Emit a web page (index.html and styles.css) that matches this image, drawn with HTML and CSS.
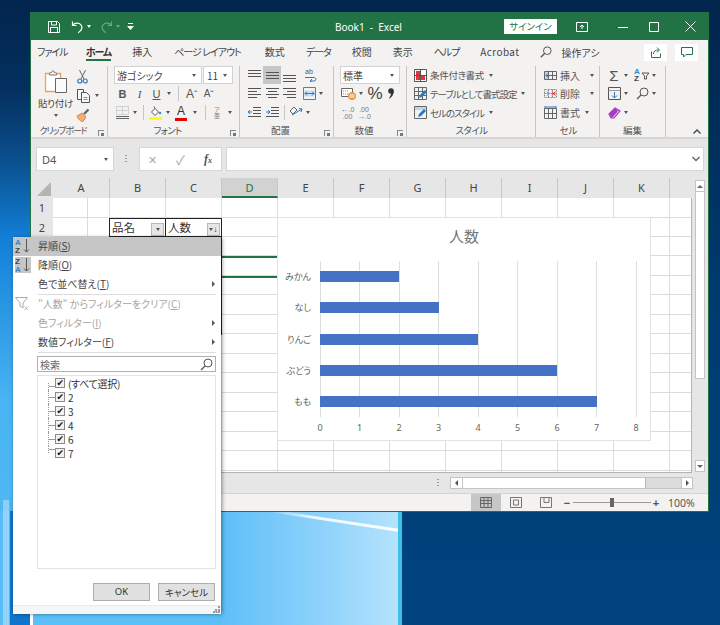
FILE: index.html
```html
<!DOCTYPE html>
<html lang="ja">
<head>
<meta charset="utf-8">
<title>Book1 - Excel</title>
<link rel="stylesheet" href="styles.css">
</head>
<body>
<div class="desktop">
  <div class="pane"><div class="beam"></div></div>
  <div class="window">
    <div class="titlebar">
      <span class="tb-ic save"><svg width="14" height="14" viewBox="0 0 14 14" fill="none" stroke="#fff"><path d="M1.5 1.5h9l2 2v9h-11z M4.5 1.5v3.5h5v-3.5 M3.500 12.500v-5h7v5"/></svg></span>
      <span class="tb-ic undo"><svg width="13" height="14" viewBox="0 0 13 14" fill="none" stroke="#fff" stroke-width="1.2"><path d="M1.5 1.5v4h4 M1.8 5.2C4 2.5 8 2.5 10 4.8c2 2.7.6 6-2.8 8"/></svg></span>
      <span class="caret white cw"></span>
      <span class="tb-ic redo"><svg width="13" height="14" viewBox="0 0 13 14" fill="none" stroke="#fff" stroke-width="1.2"><path d="M11.5 1.5v4h-4 M11.2 5.2C9 2.5 5 2.5 3 4.8c-2 2.7-.6 6 2.8 8"/></svg></span>
      <span class="caret white faded cw"></span>
      <span class="tb-ic qat"><svg width="7" height="7" viewBox="0 0 7 7" fill="#fff"><path d="M1 0h5v1H1z M0 3h7L3.500 7z"/></svg></span>
      <span class="doc-title">Book1&nbsp; -&nbsp; Excel</span>
      <span class="signin">サインイン</span>
      <span class="tb-ic display"><svg width="12" height="10" viewBox="0 0 12 10" fill="none" stroke="#fff"><path d="M.5.500h11v9H.500z"/><path d="M6 7V3M4 5l2-2 2 2" /></svg></span>
      <span class="tb-ic min"><svg width="10" height="10" viewBox="0 0 10 10" stroke="#fff"><path d="M0 5.500h10"/></svg></span>
      <span class="tb-ic max"><svg width="10" height="10" viewBox="0 0 10 10" fill="none" stroke="#fff"><path d="M.5.500h9v9h-9z"/></svg></span>
      <span class="tb-ic close"><svg width="11" height="11" viewBox="0 0 11 11" stroke="#fff"><path d="M.5.500l10 10M10.500.5l-10 10"/></svg></span>
    </div>

    <div class="tabs">
      <span class="tab kana">ファイル</span>
      <span class="tab kana active">ホーム</span>
      <span class="tab">挿入</span>
      <span class="tab kana layout">ページ レイアウト</span>
      <span class="tab">数式</span>
      <span class="tab kana">データ</span>
      <span class="tab">校閲</span>
      <span class="tab">表示</span>
      <span class="tab kana">ヘルプ</span>
      <span class="tab acro">Acrobat</span>
      <span class="tell"><svg width="12" height="12" viewBox="0 0 12 12" fill="none" stroke="#555"><circle cx="7.300" cy="4.700" r="3.800"/><path d="M4.500 7.500L.8 11.200" stroke-width="1.300"/></svg><span class="tell-text">操作アシ</span></span>
      <span class="tab-btn share"><svg width="12" height="12" viewBox="0 0 12 12" fill="none" stroke="#217346"><path d="M1.500 5.500v6h9v-4M3.500 8c0-3 2-4 5-4M7 1.500l2.500 2.500L7 6.500"/></svg></span>
      <span class="tab-btn comment"><svg width="12" height="11" viewBox="0 0 12 11" fill="none" stroke="#217346"><path d="M.5.500h11v7H5l-2.500 2.500V7.500h-2z"/></svg></span>
    </div>

    <div class="ribbon">
      <section class="group g1">
        <div class="body clip-body">
          <div class="paste">
            <svg width="24" height="26" viewBox="0 0 24 26"><path d="M1.500 4.500h15v18h-15z" fill="#fff" stroke="#eda455" stroke-width="1.300"/><path d="M5.500 4.500c0-1 1-1 2-1 0-2 3-2 3 0 1 0 2 0 2 1v1.500h-7z" fill="#f3f2f1" stroke="#777"/><path d="M11.500 9.500h11v14h-11z" fill="#fbfbfb" stroke="#666"/></svg>
            <span class="paste-label">貼り付け</span>
            <span class="caret"></span>
          </div>
          <div class="clip-col">
            <span class="ic"><svg width="11" height="15" viewBox="0 0 11 15" fill="none"><path d="M2.500 1l4.500 9M8.500 1L4 10" stroke="#666"/><circle cx="2.800" cy="12" r="2" stroke="#2b79c2" stroke-width="1.200"/><circle cx="8.200" cy="12" r="2" stroke="#2b79c2" stroke-width="1.200"/></svg></span>
            <span class="ic-cap"><svg width="15" height="15" viewBox="0 0 15 15" fill="#fafafa" stroke="#555"><path d="M1.500 1.500h6v10h-6z"/><path d="M5.500 4.500h5l3 3v7h-8z"/><path d="M7.500 9.500h4M7.500 11.500h4" stroke="#888"/></svg><span class="caret"></span></span>
            <span class="ic brush"><svg width="14" height="14" viewBox="0 0 14 14"><path d="M1 8l5-3 4 4-3 4.500c-2 .5-5-2.500-6-5.500z" fill="#f0b070" stroke="#de8a3a"/><path d="M8 6l4.500-4.500" stroke="#666" stroke-width="2.400"/></svg></span>
          </div>
        </div>
        <div class="glabel has-launcher clip-label">クリップボード<span class="launcher"></span></div>
      </section>

      <section class="group g2">
        <div class="body">
          <div class="row">
            <span class="select font-name"><span>游ゴシック</span><span class="caret"></span></span>
            <span class="select font-size"><span>11</span><span class="caret"></span></span>
          </div>
          <div class="row">
            <span class="b w17 bold">B</span>
            <span class="b w17 ital">I</span>
            <span class="b w17 under">U</span>
            <span class="b w8"><span class="caret"></span></span>
            <span class="vsep gap-sep1"></span>
            <span class="b w17 big-a">A<sup class="up">ˆ</sup></span>
            <span class="b w17 small-a">A<sup class="down">ˇ</sup></span>
          </div>
          <div class="row">
            <span class="b w16"><svg width="13" height="13" viewBox="0 0 13 13" fill="none"><path d="M.5.500h12v8H.500zM6.500.500v8M.5 4.500h12" stroke="#b5b5b5" stroke-dasharray="1 1"/><path d="M0 10.500h13" stroke="#666"/><path d="M0 12.500h13" stroke="#666"/></svg></span>
            <span class="b w10"><span class="caret"></span></span>
            <span class="vsep gap-sep2"></span>
            <span class="b w18"><svg width="13" height="14" viewBox="0 0 13 14"><path d="M2.500 6L6 2.500 9.500 6 6 9.500z" fill="#fff" stroke="#555"/><path d="M5 .5l1 2" stroke="#555"/><circle cx="11" cy="7" r="1.300" fill="#3a8fd0"/><path d="M0 11h13v3H0z" fill="#ffff00"/></svg></span>
            <span class="b w8"><span class="caret"></span></span>
            <span class="b w18 color-a">A<span class="red"></span></span>
            <span class="b w10"><span class="caret"></span></span>
            <span class="vsep gap-sep3"></span>
            <span class="b w16 furi">ア<small>亜</small></span>
            <span class="b w10"><span class="caret"></span></span>
          </div>
        </div>
        <div class="glabel has-launcher font-label">フォント<span class="launcher"></span></div>
      </section>

      <section class="group g3">
        <div class="body">
          <div class="row">
            <span class="b w17"><svg width="13" height="13" viewBox="0 0 13 13" stroke="#555"><path d="M0 1.500h13M0 4.500h13M0 7.500h13"/></svg></span>
            <span class="b w18 on"><svg width="13" height="13" viewBox="0 0 13 13" stroke="#555"><path d="M0 3.500h13M0 6.500h13M0 9.500h13"/></svg></span>
            <span class="b w17"><svg width="13" height="13" viewBox="0 0 13 13" stroke="#555"><path d="M0 6.500h13M0 9.500h13M0 12.500h13"/></svg></span>
            <span class="b w18 ml3"><svg width="13" height="14" viewBox="0 0 13 14" fill="none"><text x="1" y="6" class="svg-ab">ab</text><path d="M1 9.500h9c2.500 0 2.500 3.500 0 3.500H6M8 11l-2 2 2 1" stroke="#2b79c2"/></svg></span>
          </div>
          <div class="row">
            <span class="b w17"><svg width="13" height="11" viewBox="0 0 13 11" stroke="#555"><path d="M0 .5h13M0 3.500h9M0 6.500h13M0 9.500h9"/></svg></span>
            <span class="b w18"><svg width="13" height="11" viewBox="0 0 13 11" stroke="#555"><path d="M0 .5h13M2 3.500h9M0 6.500h13M2 9.500h9"/></svg></span>
            <span class="b w17"><svg width="13" height="11" viewBox="0 0 13 11" stroke="#555"><path d="M0 .5h13M4 3.500h9M0 6.500h13M4 9.500h9"/></svg></span>
            <span class="b w16 ml3"><svg width="13" height="13" viewBox="0 0 13 13" fill="none"><path d="M.5.500h12v12H.500z" stroke="#777"/><path d="M1 3.500h11v6H1z" fill="#cfe3f4"/><path d="M2 6.500h9M4 4.500l-2 2 2 2M9 4.500l2 2-2 2" stroke="#2b79c2"/></svg></span>
            <span class="b w8"><span class="caret"></span></span>
          </div>
          <div class="row">
            <span class="b w17"><svg width="13" height="11" viewBox="0 0 13 11" fill="none"><path d="M5 .5h8M5 3.500h8M5 6.500h8M0 9.500h13" stroke="#555"/><path d="M4 5H0M2 3L0 5l2 2" stroke="#2b79c2"/></svg></span>
            <span class="b w18"><svg width="13" height="11" viewBox="0 0 13 11" fill="none"><path d="M5 .5h8M5 3.500h8M5 6.500h8M0 9.500h13" stroke="#555"/><path d="M0 5h4M2 3l2 2-2 2" stroke="#2b79c2"/></svg></span>
            <span class="vsep gap-sep4"></span>
            <span class="b w17"><svg width="14" height="13" viewBox="0 0 14 13" fill="none"><path d="M1 5l4-4 3 3-4 4z" stroke="#666"/><path d="M3 9l10-6M10 2.500l3 .5-1 3" stroke="#2b79c2"/></svg></span>
            <span class="b w8"><span class="caret"></span></span>
          </div>
        </div>
        <div class="glabel has-launcher">配置<span class="launcher"></span></div>
      </section>

      <section class="group g4">
        <div class="body">
          <div class="row"><span class="select num"><span>標準</span><span class="caret"></span></span></div>
          <div class="row">
            <span class="b w17"><svg width="16" height="13" viewBox="0 0 16 13"><path d="M.5 1.500h11v8H.500z" fill="#fff" stroke="#666"/><path d="M2 4h6M2 7h6" stroke="#888" stroke-dasharray="1 1"/><circle cx="11" cy="9" r="4" fill="#eb9a45"/><path d="M8.500 8h5M8.500 10h5" stroke="#fff"/></svg></span>
            <span class="b w8"><span class="caret"></span></span>
            <span class="b w20 pct">%</span>
            <span class="b w12"><svg width="6" height="11" viewBox="0 0 6 11"><circle cx="3" cy="3" r="2.800" fill="#333"/><path d="M5.800 3c0 3-1.500 6-4 7.500L1 10c1.600-1.500 2-3.500 2-5z" fill="#333"/></svg></span>
          </div>
          <div class="row">
            <span class="b w15 dec"><span class="dec-top"><i class="arrow">←</i>.0</span><span>.00</span></span>
            <span class="b w18 dec"><span>.00</span><span class="dec-top"><i class="arrow">→</i>.0</span></span>
          </div>
        </div>
        <div class="glabel has-launcher">数値<span class="launcher"></span></div>
      </section>

      <section class="group g5">
        <div class="body">
          <div class="row cmd">
            <svg width="13" height="13" viewBox="0 0 13 13"><path d="M.5.500h12v12H.500z" fill="#fff" stroke="#555"/><path d="M2 2h4v4H2zM7 7h4v4H7zM2 7h4v4H2z" fill="#e2333a"/><path d="M6.500 0v13M0 6.500h13" stroke="#555"/></svg>
            <span class="t-kanji">条件付き書式</span><span class="caret"></span>
          </div>
          <div class="row cmd">
            <svg width="13" height="13" viewBox="0 0 13 13" fill="none"><path d="M.5.500h12v12H.500zM.5 4.500h12M.5 8.500h12M4.500.500v12M8.500.500v12" stroke="#666"/><path d="M5 11l1-3 5-5 2 2-5 5z" fill="#2b79c2"/></svg>
            <span class="t-kana">テーブルとして書式設定</span><span class="caret"></span>
          </div>
          <div class="row cmd">
            <svg width="13" height="13" viewBox="0 0 13 13" fill="none"><path d="M.5.500h12v12H.500z" stroke="#666"/><path d="M1 1h11v3H1z" fill="#bcd6ee"/><path d="M4 11l1-3 5-5 2 2-5 5z" fill="#2b79c2"/></svg>
            <span class="t-kana">セルのスタイル</span><span class="caret"></span>
          </div>
        </div>
        <div class="glabel style-label">スタイル</div>
      </section>

      <section class="group g6">
        <div class="body">
          <div class="row cmd cell-cmd">
            <svg width="13" height="13" viewBox="0 0 13 13" fill="none"><path d="M.5 2.500h12v8H.500zM.5 6.500h12M4.500 2.500v8M8.500 2.500v8" stroke="#666"/><path d="M1 3h3v7H1z" fill="#bcd6ee"/><path d="M7 6.500H2M4 4.500l-2 2 2 2" stroke="#2b79c2"/></svg>
            <span>挿入</span><span class="caret push"></span>
          </div>
          <div class="row cmd cell-cmd">
            <svg width="13" height="13" viewBox="0 0 13 13" fill="none"><path d="M.5 2.500h12v8H.500zM.5 6.500h12M4.500 2.500v8M8.500 2.500v8" stroke="#888" stroke-dasharray="2 1"/><path d="M3 4.500l2 2-2 2" stroke="#2b79c2"/><path d="M8 4.500l3.500 4M11.500 4.500L8 8.500" stroke="#e2333a"/></svg>
            <span>削除</span><span class="caret push"></span>
          </div>
          <div class="row cmd cell-cmd">
            <svg width="13" height="13" viewBox="0 0 13 13" fill="none"><path d="M.5 2.500h12v10H.500zM.5 7.500h12M4.500 2.500v10M8.500 2.500v10" stroke="#666"/><path d="M1 0v2.500M12 0v2.500M1 1h11" stroke="#2b79c2"/></svg>
            <span>書式</span><span class="caret"></span>
          </div>
        </div>
        <div class="glabel">セル</div>
      </section>

      <section class="group g7">
        <div class="body">
          <div class="row">
            <span class="b w16 sigma">Σ</span>
            <span class="b w8"><span class="caret"></span></span>
            <span class="b w16 ml4 sortf"><svg width="16" height="14" viewBox="0 0 16 14" fill="none"><text x="0" y="6" class="svg-az blue">A</text><text x="0" y="13" class="svg-az">Z</text><path d="M8 5h7l-2.500 3v3h-2V8z" stroke="#555"/></svg></span>
            <span class="b w8"><span class="caret"></span></span>
          </div>
          <div class="row">
            <span class="b w16"><svg width="13" height="13" viewBox="0 0 13 13" fill="none"><path d="M.5.500h12v12H.500z" stroke="#555"/><path d="M.5 3.500h12" stroke="#999"/><path d="M6.500 5v5.500M4 8.500l2.500 2.500L9 8.500" stroke="#2b79c2"/></svg></span>
            <span class="b w8"><span class="caret"></span></span>
            <span class="b w16 ml4"><svg width="13" height="13" viewBox="0 0 13 13" fill="none" stroke="#555"><circle cx="8" cy="5" r="4"/><path d="M5 8l-4 4" stroke-width="1.300"/></svg></span>
            <span class="b w8"><span class="caret"></span></span>
          </div>
          <div class="row">
            <span class="b w16"><svg width="13" height="12" viewBox="0 0 13 12"><path d="M1 7l6-6 5 3-6 7H3z" fill="#e7cdf0" stroke="#a23fbe" stroke-width="1.200"/><path d="M1 7l3 4 6-7-3-3z" fill="#a23fbe"/></svg></span>
            <span class="b w8"><span class="caret"></span></span>
          </div>
        </div>
        <div class="glabel">編集</div>
      </section>

      <span class="collapse"><svg width="8" height="5" viewBox="0 0 8 5" fill="none" stroke="#444" stroke-width="1.300"><path d="M.5 4.500L4 1l3.500 3.500"/></svg></span>
    </div>

    <div class="formula">
      <div class="namebox"><span>D4</span><span class="caret"></span></div>
      <span class="grip-v"></span>
      <div class="fx-box">
        <span class="fx-x">✕</span>
        <span class="fx-c">✓</span>
        <span class="fx-f"><i>f</i><small>x</small></span>
      </div>
      <div class="fx-input"><svg width="8" height="6" viewBox="0 0 8 6" fill="none" stroke="#666" stroke-width="1.400"><path d="M.5 1L4 4.500 7.500 1"/></svg></div>
    </div>

    <div class="sheetwrap">
      <div class="sheet">
        <div class="colheads">
          <span class="corner"></span>
          <span class="ch wa">A</span><span class="ch">B</span><span class="ch">C</span><span class="ch sel">D</span><span class="ch">E</span><span class="ch">F</span><span class="ch">G</span><span class="ch">H</span><span class="ch">I</span><span class="ch">J</span><span class="ch">K</span><span class="ch wl"></span>
        </div>
        <div class="sheetbody">
          <div class="rowheads">
            <span>1</span><span>2</span>
          </div>
          <div class="cells">
            <div class="cell th cb2">品名<span class="fbtn"><span class="caret"></span></span></div>
            <div class="cell th cc2">人数<span class="fbtn sorted"><span class="caret"></span><i>↓</i></span></div>
            <div class="tbl-edge"></div>
            <div class="cell selected"></div>
            <div class="chart">
              <div class="chart-title">人数</div>
              <div class="bars">
                <div class="bar-row"><span class="cat">みかん</span><span class="bar v2"></span></div>
                <div class="bar-row"><span class="cat">なし</span><span class="bar v3"></span></div>
                <div class="bar-row"><span class="cat">りんご</span><span class="bar v4"></span></div>
                <div class="bar-row"><span class="cat">ぶどう</span><span class="bar v6"></span></div>
                <div class="bar-row"><span class="cat">もも</span><span class="bar v7"></span></div>
              </div>
              <div class="ticks"><span>0</span><span>1</span><span>2</span><span>3</span><span>4</span><span>5</span><span>6</span><span>7</span><span>8</span></div>
            </div>
          </div>
        </div>
      </div>
      <div class="vscroll">
        <span class="sb-btn"><span class="tri up"></span></span>
        <span class="sb-thumb"></span>
        <span class="sb-btn bottom"><span class="tri dn"></span></span>
      </div>
    </div>

    <div class="hbar">
      <span class="grip-v hgrip"></span>
      <div class="hscroll">
        <span class="hs-btn"><span class="tri lf"></span></span>
        <span class="hs-thumb"></span>
        <span class="hs-btn end"><span class="tri rt"></span></span>
      </div>
    </div>

    <div class="status">
      <span class="view on"><svg width="12" height="11" viewBox="0 0 12 11" fill="none" stroke="#666"><path d="M.5.500h11v10H.500zM.5 3.500h11M.5 6.500h11M4 .5v10M8 .5v10"/></svg></span>
      <span class="view"><svg width="12" height="11" viewBox="0 0 12 11" fill="none" stroke="#777"><path d="M.5.500h11v10H.500zM3.500 3h5v5h-5z"/></svg></span>
      <span class="view"><svg width="12" height="11" viewBox="0 0 12 11" fill="none" stroke="#777"><path d="M.5.500h11v10H.500zM4 .5v5h5v-5"/></svg></span>
      <span class="zm">−</span>
      <span class="slider"><span class="knob"></span></span>
      <span class="zm">+</span>
      <span class="pct-label">100%</span>
    </div>
  </div>

  <div class="filter">
    <div class="mi hot">
      <span class="mi-ic"><svg width="16" height="16" viewBox="0 0 16 16" fill="none"><text x="0" y="7" class="svg-az blue">A</text><text x="0" y="15" class="svg-az">Z</text><path d="M11.500 1v13M9 11.500l2.500 2.500 2.500-2.500" stroke="#555"/></svg></span>
      <span>昇順(<u>S</u>)</span>
    </div>
    <div class="mi">
      <span class="mi-ic boxed"><svg width="16" height="16" viewBox="0 0 16 16" fill="none"><text x="0" y="7" class="svg-az">Z</text><text x="0" y="15" class="svg-az blue">A</text><path d="M11.500 1v13M9 11.500l2.500 2.500 2.500-2.500" stroke="#555"/></svg></span>
      <span>降順(<u>O</u>)</span>
    </div>
    <div class="mi">
      <span class="mi-ic"></span><span>色で並べ替え(<u>T</u>)</span><span class="tri rt sub"></span>
    </div>
    <div class="msep"></div>
    <div class="mi off">
      <span class="mi-ic"><svg width="14" height="14" viewBox="0 0 14 14" fill="none" stroke="#aaa"><path d="M.5.500h12L8 6v5L5 9V6z"/><path d="M9.500 9.500l3.500 3.500M13 9.500l-3.500 3.500" stroke="#bbb"/></svg></span>
      <span>"人数" からフィルターをクリア(<u>C</u>)</span>
    </div>
    <div class="mi off">
      <span class="mi-ic"></span><span>色フィルター(<u>I</u>)</span><span class="tri rt sub"></span>
    </div>
    <div class="mi">
      <span class="mi-ic"></span><span>数値フィルター(<u>F</u>)</span><span class="tri rt sub"></span>
    </div>
    <div class="msep"></div>
    <div class="search"><span>検索</span><svg width="13" height="13" viewBox="0 0 13 13" fill="none" stroke="#555"><circle cx="8" cy="5" r="4"/><path d="M5 8l-4 4" stroke-width="1.200"/></svg></div>
    <div class="list">
      <div class="li first"><span class="chk">✔</span><span>(すべて選択)</span></div>
      <div class="li"><span class="chk">✔</span><span>2</span></div>
      <div class="li"><span class="chk">✔</span><span>3</span></div>
      <div class="li"><span class="chk">✔</span><span>4</span></div>
      <div class="li"><span class="chk">✔</span><span>6</span></div>
      <div class="li last"><span class="chk">✔</span><span>7</span></div>
    </div>
    <div class="btns">
      <span class="btn ok">OK</span>
      <span class="btn">キャンセル</span>
    </div>
    <div class="gripbar"><svg width="7" height="7" viewBox="0 0 7 7" fill="#999"><path d="M5 0h2v2H5zM2 3h2v2H2zM5 3h2v2H5zM0 5h2v2H0zM2.500 5h2v2h-2zM5 5h2v2H5z"/></svg></div>
  </div>
</div>
</body>
</html>
```
FILE: styles.css
```css
* { box-sizing: border-box; }
html, body { margin: 0; padding: 0; }
body {
  width: 720px; height: 625px; overflow: hidden;
  font-family: "Noto Sans CJK JP", "Noto Sans", sans-serif;
  font-feature-settings: "palt";
  font-size: 10px; color: #444;
}
svg { display: block; flex: none; }
.svg-ab { font: 7px "Liberation Sans", sans-serif; fill: #555; }
.svg-az { font: bold 8px "Liberation Sans", sans-serif; fill: #444; }
.svg-az.blue { fill: #2b89d6; }

.desktop {
  position: relative; width: 720px; height: 625px; overflow: hidden;
  background:
    linear-gradient(90deg, transparent 0 3px, rgba(255,255,255,.35) 3px 9px, transparent 9px) 0 500px / 13px 125px no-repeat,
    linear-gradient(90deg, #56bbf6 0 10px, #0f75cc 10px 30px, #fff 30px 33px, #5cc0f8 33px) 0 511px / 222px 114px no-repeat,
    linear-gradient(180deg, #02254d 0, #04305f 90px, #0a4f8e 160px, #1380d8 240px, #48b4f3 400px, #56bbf6 100%) 0 0 / 31px 100% no-repeat,
    linear-gradient(180deg, #02254d 0, #002a56 80px, #003b70 300px, #00447f 625px);
}
.pane {
  position: absolute; left: 222px; top: 511px; width: 180px; height: 114px; overflow: hidden;
  background: linear-gradient(90deg, #5fbff8 0, #8ed2fb 100px, #b4e3fd 176px);
  border-right: 4px solid #3fc0e8;
}
.beam {
  position: absolute; left: 46px; top: 8px; width: 132px; height: 3px; transform: rotate(8.600deg);
  background: linear-gradient(90deg, rgba(255,255,255,0), rgba(255,255,255,.85) 35%, #fff);
}

/* window */
.window {
  position: absolute; left: 30px; top: 12px; width: 679px; height: 500px;
  border: 1px solid #217346; background: #f3f2f1;
  display: flex; flex-direction: column;
}
.titlebar {
  height: 27px; flex: none; background: #217346; color: #fff;
  display: flex; align-items: center; font-size: 10.500px;
}
.tb-ic { display: flex; align-items: center; justify-content: center; flex: none; }
.save { margin-left: 16px; }
.undo { margin-left: 10px; }
.redo { margin-left: 9px; opacity: .35; }
.qat { margin-left: 7px; }
.cw { margin: 0 0 0 3px; }
.doc-title { margin-left: 201px; width: 115px; font-family: "Noto Sans", sans-serif; font-size: 10px; white-space: nowrap; }
.signin {
  width: 53px; height: 15px; margin-left: 54px; background: #fff; color: #217346;
  font-size: 9.500px; line-height: 15px; text-align: center;
}
.display { margin-left: 19px; }
.min { margin-left: 30px; }
.max { margin-left: 21px; }
.close { margin-left: 26px; }

.caret {
  display: inline-block; flex: none; width: 0; height: 0;
  border-left: 2.500px solid transparent; border-right: 2.500px solid transparent;
  border-top: 3px solid #555;
}
.caret.white { border-top-color: #fff; }
.caret.faded { opacity: .35; }

/* tabs */
.tabs {
  height: 24px; flex: none; display: flex; align-items: center;
  padding: 0 10px 0 6px; gap: 21px; font-size: 10px; position: relative;
}
.tab { position: relative; white-space: nowrap; line-height: 24px; }
.tab.kana { letter-spacing: -1px; }
.tab.layout { margin: 0 3px 0 1px; }
.tab.acro { letter-spacing: .4px; }
.tab.active { font-weight: 700; color: #333; margin-left: -3px; }
.tab.active::after {
  content: ""; position: absolute; left: 0; right: 0; bottom: 3px; height: 2px; background: #217346;
}
.tell { display: flex; align-items: center; gap: 9px; width: 60px; overflow: hidden; white-space: nowrap; }
.tell-text { display: block; }
.tab-btn {
  width: 23px; height: 17px; background: #fff; display: flex; align-items: center; justify-content: center; flex: none;
}
.share { margin-left: auto; }
.comment { margin-left: -13px; }

/* ribbon */
.ribbon {
  height: 75px; flex: none; display: flex; padding-top: 2px;
  border-bottom: 2px solid #d8d7d6;
}
.group { height: 71px; display: flex; flex-direction: column; border-right: 1px solid #c6c6c6; flex: none; position: relative; }
.g1 { width: 77px; }
.g2 { width: 132px; padding-left: 6px; }
.g3 { width: 94px; padding-left: 6px; }
.g4 { width: 73px; padding-left: 6px; }
.g5 { width: 129px; padding-left: 7px; }
.g6 { width: 64px; padding-left: 8px; }
.g7 { width: 66px; padding-left: 6px; }
.body { flex: 1; display: flex; flex-direction: column; }
.clip-body { flex-direction: row; }
.row { display: flex; align-items: center; height: 19px; flex: none; }
.row:first-child { height: 18px; }
.glabel {
  position: relative; height: 13px; line-height: 13px; font-size: 9.500px; text-align: center; color: #555; white-space: nowrap;
}
.g2 .glabel, .g3 .glabel, .g4 .glabel, .g5 .glabel, .g6 .glabel, .g7 .glabel { margin-left: -6px; }
.glabel.has-launcher { padding-right: 12px; }
.clip-label { font-size: 9px; letter-spacing: -1.200px; }
.font-label { letter-spacing: -.800px; }
.style-label { letter-spacing: -.500px; }
.launcher {
  position: absolute; right: 3px; bottom: 1px; width: 6px; height: 6px;
  border-left: 1px solid #888; border-top: 1px solid #888;
}
.launcher::after {
  content: ""; position: absolute; right: 0; bottom: 0; width: 3px; height: 3px; background: #777;
}
.paste { width: 45px; display: flex; flex-direction: column; align-items: center; padding-left: 4px; padding-top: 3px; }
.paste-label { font-size: 9.500px; line-height: 14px; margin-top: 1px; white-space: nowrap; letter-spacing: -.300px; }
.paste .caret { margin-top: 4px; }
.clip-col { display: flex; flex-direction: column; padding-top: 1px; }
.clip-col > span { height: 19px; display: flex; align-items: center; }
.ic { padding-left: 1px; }
.ic.brush { padding-left: 0; }
.ic-cap { gap: 4px; }

.select {
  background: #fff; border: 1px solid #d2d2d2; height: 18px; display: flex;
  align-items: center; justify-content: space-between; padding: 0 5px 0 2px; font-size: 10px; flex: none;
}
.font-name { width: 88px; margin-right: 1px; }
.font-size { width: 30px; padding-left: 3px; }
.num { width: 60px; padding-left: 2px; }

.b { display: flex; align-items: center; justify-content: center; height: 18px; flex: none; position: relative; color: #555; }
.w8 { width: 8px; } .w10 { width: 10px; } .w12 { width: 12px; } .w15 { width: 15px; }
.w16 { width: 16px; } .w17 { width: 17px; } .w18 { width: 18px; } .w20 { width: 20px; }
.ml3 { margin-left: 3px; } .ml4 { margin-left: 4px; }
.on { background: #c6c6c6; }
.vsep { width: 1px; height: 15px; background: #c6c6c6; flex: none; }
.gap-sep1 { margin: 0 4px 0 5px; }
.gap-sep2 { margin: 0 2px 0 3px; }
.gap-sep3 { margin: 0 3px 0 5px; }
.gap-sep4 { margin: 0 2px 0 3px; }
.bold { font: 700 11px "Liberation Sans", sans-serif; }
.ital { font: italic 11px "Liberation Serif", serif; }
.under { font: 11px "Liberation Sans", sans-serif; text-decoration: underline; }
.big-a { font: 12px "Liberation Sans", sans-serif; }
.small-a { font: 10px "Liberation Sans", sans-serif; }
sup { font-size: 9px; line-height: 0; color: #2b79c2; margin-left: 0; font-weight: 700; }
.color-a { font: 12px "Liberation Sans", sans-serif; color: #333; padding-bottom: 3px; }
.red { position: absolute; left: 3px; right: 3px; bottom: 1px; height: 3px; background: #e60000; }
.furi { flex-direction: column; font-size: 6px; line-height: 6px; color: #888; }
.furi small { font-size: 6px; }
.pct { font: 17px "Liberation Sans", sans-serif; color: #444; }
.dec { flex-direction: column; font: 7px/7px "Liberation Sans", sans-serif; color: #777; }
.dec-top { display: flex; align-items: center; }
.arrow { font-style: normal; color: #2b79c2; font-size: 8px; font-weight: 700; }
.cmd { gap: 3px; font-size: 10px; color: #555; white-space: nowrap; }
.cmd .caret { margin-left: 2px; }
.t-kanji { font-size: 9.500px; letter-spacing: -.300px; }
.t-kana { font-size: 9.500px; letter-spacing: -1px; }
.cell-cmd { width: 50px; }
.cell-cmd .push { margin-left: auto; }
.sigma { font: 15px "Liberation Sans", sans-serif; color: #555; }
.collapse { align-self: flex-end; margin: 0 0 3px 27px; }

/* formula */
.formula {
  height: 39px; flex: none; background: #e6e6e6; display: flex; padding: 8px 4px 7px 5px;
}
.namebox {
  width: 78px; background: #fff; border: 1px solid #d6d6d6; display: flex; align-items: center;
  justify-content: space-between; padding: 0 5px 0 5px; font: 11px "Noto Sans", sans-serif; color: #555;
}
.grip-v {
  width: 2px; height: 9px; margin: 8px 12px 0 11px; flex: none;
  background: repeating-linear-gradient(180deg, #999 0 1px, transparent 1px 3px);
}
.fx-box {
  width: 83px; background: #fff; border: 1px solid #d6d6d6; display: flex; align-items: center;
  color: #aaa; font-size: 10px; flex: none; position: relative;
}
.fx-x { width: 11px; margin-left: 8px; font-size: 11px; }
.fx-c { width: 16px; margin-left: 17px; font-size: 13px; }
.fx-f { margin-left: 12px; color: #555; font: italic 700 12px "Liberation Serif", serif; }
.fx-f i { font-style: italic; }
.fx-f small { font-size: 8px; }
.fx-input {
  flex: 1; margin-left: 4px; background: #fff; border: 1px solid #d6d6d6; display: flex;
  align-items: center; justify-content: flex-end; padding-right: 3px;
}

/* sheet */
.sheetwrap { height: 295px; flex: none; display: flex; background: #e6e6e6; }
.sheet { width: 661px; flex: none; display: flex; flex-direction: column; }
.colheads { height: 20px; display: flex; flex: none; }
.corner { width: 22px; position: relative; flex: none; }
.corner::after {
  content: ""; position: absolute; right: 2px; bottom: 2px; width: 0; height: 0;
  border-left: 14px solid transparent; border-bottom: 14px solid #b4b4b4;
}
.ch {
  width: 56px; flex: none; text-align: center; line-height: 19px; border-right: 1px solid #c8c8c8;
  font: 11px/19px "Noto Sans", sans-serif; color: #444;
}
.ch.wa { width: 57px; }
.ch.wl { width: 22px; border-right: 0; }
.ch.sel { background: #d2d2d2; border-bottom: 2px solid #217346; color: #217346; }
.sheetbody { flex: 1; display: flex; min-height: 0; }
.rowheads {
  width: 22px; flex: none; display: grid; grid-auto-rows: 19.500px; align-content: start; text-align: center;
  font: 11px/19px "Noto Sans", sans-serif; color: #444;
}
.cells {
  width: 639px; flex: none; height: 275px; position: relative;
  display: grid; grid-template-columns: 57px repeat(10, 56px) 22px; grid-template-rows: repeat(14, 19.500px);
  border-right: 1px solid #b4b4b4; border-bottom: 1px solid #b4b4b4;
  background:
    repeating-linear-gradient(90deg, #dcdcdc 0 1px, transparent 1px 56px) 56px 0,
    repeating-linear-gradient(180deg, transparent 0 18.500px, #dcdcdc 18.500px 19.500px),
    #fff;
}
.cell { position: relative; }
.th {
  grid-row: 2; border: 1px solid #222; background: #fff; margin-left: -1px;
  font-size: 11.500px; line-height: 16px; padding-left: 2px; color: #333; letter-spacing: 0;
}
.cb2 { grid-column: 2; }
.cc2 { grid-column: 3; }
.fbtn {
  position: absolute; right: 1px; bottom: 0; width: 13px; height: 13px; background: #e6e6e6; border: 1px solid #b8b8b8;
  display: flex; align-items: center; justify-content: center;
}
.fbtn.sorted i { font: 700 9px/9px "Liberation Sans", sans-serif; color: #444; }
.tbl-edge { grid-column: 3; grid-row: 3 / 8; border-right: 1px solid #222; }
.selected { grid-column: 4; grid-row: 4; border-top: 2px solid #217346; border-bottom: 2px solid #217346; margin: -1px 0 -2px; }

.chart {
  position: absolute; left: 224px; top: 19px; width: 374px; height: 224px;
  background: #fff; border: 1px solid #e2e2e2; display: flex; flex-direction: column;
}
.chart-title { height: 43px; padding-top: 6px; text-align: center; font-size: 15px; line-height: 24px; color: #777; flex: none; }
.bars {
  height: 156px; flex: none; display: flex; flex-direction: column;
  background: repeating-linear-gradient(90deg, #dedede 0 1px, transparent 1px 39.500px) 42px 0 / 317px 100% no-repeat;
}
.bar-row { flex: 1; display: flex; align-items: center; }
.cat { width: 33px; margin-right: 9px; text-align: right; font-size: 9px; color: #666; white-space: nowrap; flex: none; }
.bar { height: 11px; background: #4472c4; }
.v2 { width: 79px; } .v3 { width: 118.500px; } .v4 { width: 158px; } .v6 { width: 237px; } .v7 { width: 276.500px; }
.ticks { display: flex; margin: 4px 0 0 22.250px; font: 9px/14px "Noto Sans", sans-serif; color: #666; }
.ticks span { width: 39.500px; text-align: center; flex: none; }

.vscroll { width: 16px; flex: none; padding: 2px 3px 0 3px; display: flex; flex-direction: column; }
.sb-btn { height: 12px; flex: none; background: #fff; border: 1px solid #c4c4c4; display: flex; align-items: center; justify-content: center; }
.sb-btn.bottom { margin-top: auto; margin-bottom: 1px; }
.sb-thumb { height: 187px; flex: none; background: #fff; border: 1px solid #c4c4c4; border-top: 0; }
.tri { display: block; width: 0; height: 0; flex: none; }
.tri.up { border: 3px solid transparent; border-top: 0; border-bottom: 3px solid #666; border-left-width: 3.500px; border-right-width: 3.500px; }
.tri.dn { border: 3px solid transparent; border-bottom: 0; border-top: 3px solid #666; border-left-width: 3.500px; border-right-width: 3.500px; }
.tri.lf { border: 3px solid transparent; border-left: 0; border-right: 3px solid #555; }
.tri.rt { border: 3px solid transparent; border-right: 0; border-left: 3px solid #555; }

.hbar { height: 21px; flex: none; background: #e6e6e6; display: flex; align-items: center; border-bottom: 1px solid #d4d4d4; }
.hgrip { margin: 0 0 0 406px; height: 9px; }
.hscroll {
  margin-left: 11px; width: 243px; height: 12px; display: flex; background: #dcdcdc;
  border: 1px solid #c4c4c4; border-left-color: #c4c4c4;
}
.hs-btn { width: 11px; background: #fff; display: flex; align-items: center; justify-content: center; flex: none; }
.hs-btn.end { margin-left: auto; border-left: 1px solid #c4c4c4; }
.hs-thumb { width: 184px; background: #fff; border-left: 1px solid #c4c4c4; border-right: 1px solid #b8b8b8; }

.status { flex: 1; display: flex; align-items: center; background: #f3f2f1; min-height: 0; }
.view { width: 30px; height: 100%; display: flex; align-items: center; justify-content: center; flex: none; }
.view:first-child { margin-left: 440px; }
.view.on { background: #c6c6c6; }
.zm { font: 700 11px "Liberation Sans", sans-serif; width: 8px; text-align: center; color: #555; flex: none; margin-left: 2px; }
.slider { width: 78px; height: 1px; background: #999; margin: 0 0 0 2px; position: relative; flex: none; }
.slider + .zm { margin-left: 1px; }
.knob { position: absolute; left: 37px; top: -4px; width: 4px; height: 9px; background: #666; }
.pct-label { margin-left: 8px; font: 10.500px "Noto Sans", sans-serif; color: #555; }

/* filter dropdown */
.filter {
  position: absolute; left: 13px; top: 237px; width: 208px; height: 376px; background: #fff;
  box-shadow: 1px 1px 4px rgba(0,0,0,.45); display: flex; flex-direction: column; color: #444;
}
.mi { height: 19px; flex: none; display: flex; align-items: center; font-size: 10px; white-space: nowrap; padding-bottom: 2px; }
.mi.hot { background: #c6c6c6; }
.mi.off { color: #a6a6a6; }
.mi-ic { width: 25px; height: 16px; flex: none; display: flex; align-items: center; padding-left: 2px; }
.boxed svg { background: #c6c6c6; }
.sub { margin-left: auto; margin-right: 6px; }
.msep { height: 1px; margin: 0 5px 0 25px; background: #dcdcdc; flex: none; }
.search {
  margin: 3px 5px 0 24px; height: 16px; flex: none; border: 1px solid #b0b0b0; display: flex;
  align-items: center; justify-content: space-between; padding: 0 2px 0 2px; color: #666; font-size: 10px;
}
.list {
  margin: 3px 5px 0 24px; height: 194px; flex: none; border: 1px solid #e4e4e4; padding: 0 0 0 9px;
}
.li { height: 14px; display: flex; align-items: center; gap: 3px; font-size: 10px; position: relative; padding-left: 8px; color: #333; letter-spacing: -.300px; }
.li::before {
  content: ""; position: absolute; left: 1px; top: 0; bottom: 0; width: 7px;
  border-left: 1px dotted #999;
  background: linear-gradient(#999, #999) 0 50% / 100% 1px no-repeat;
}
.li.first::before { top: 7px; }
.li.last::before { bottom: 7px; }
.chk {
  width: 10px; height: 10px; border: 1px solid #8a8a8a; background: #f2f2f2; font-size: 9px; line-height: 8px;
  text-align: center; color: #111; flex: none; font-family: "DejaVu Sans", sans-serif;
}
.btns { display: flex; justify-content: flex-end; gap: 8px; margin: 14px 6px 0 0; flex: none; }
.btn {
  width: 57px; height: 18px; background: #e1e1e1; border: 1px solid #adadad; text-align: center;
  font-size: 9.500px; line-height: 16px; color: #333;
}
.ok { font-family: "Noto Sans", sans-serif; }
.gripbar {
  margin-top: 4px; flex: 1; background: #f4f6f7; border-top: 1px solid #e8ecee; display: flex; justify-content: flex-end; align-items: flex-end; padding: 0 1px 1px 0;
}
```
